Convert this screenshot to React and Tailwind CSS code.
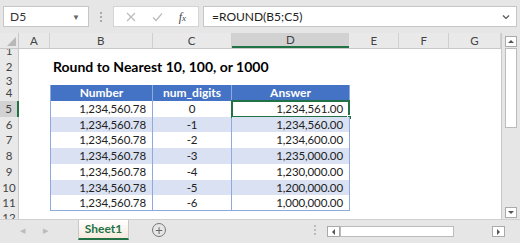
import React from 'react';

const font = { fontFamily: 'Lato, "Open Sans", sans-serif' };

const cols = [
  { key: 'A', w: 'w-[31px]' },
  { key: 'B', w: 'w-[103px]' },
  { key: 'C', w: 'w-[79px]' },
  { key: 'D', w: 'w-[118px]' },
  { key: 'E', w: 'w-[50px]' },
  { key: 'F', w: 'w-[50px]' },
  { key: 'G', w: 'w-[52px]' },
];

const data = [
  ['1,234,560.78', '0', '1,234,561.00'],
  ['1,234,560.78', '-1', '1,234,560.00'],
  ['1,234,560.78', '-2', '1,234,600.00'],
  ['1,234,560.78', '-3', '1,235,000.00'],
  ['1,234,560.78', '-4', '1,230,000.00'],
  ['1,234,560.78', '-5', '1,200,000.00'],
  ['1,234,560.78', '-6', '1,000,000.00'],
];

const rowHeights = {
  1: 'h-[7px]', 2: 'h-[21px]', 3: 'h-[8px]', 4: 'h-[16px]',
  5: 'h-[16px]', 6: 'h-[15px]', 7: 'h-[16px]', 8: 'h-[16px]',
  9: 'h-[16px]', 10: 'h-[15px]', 11: 'h-[16px]', 12: 'h-[8px]',
};

function RowHeader({ n }) {
  const active = n === 5;
  return (
    <div
      className={`w-[19px] shrink-0 flex justify-center overflow-hidden text-[11.5px] text-[#444] border-r ${
        active ? 'bg-[#d2d2d2] border-r-2 border-[#217346]' : 'bg-[#e9e9e9] border-[#c8c8c8]'
      } ${n === 1 ? 'items-end leading-[10px]' : n === 12 ? 'items-start leading-[14px]' : 'items-center'}`}
    >
      {n}
    </div>
  );
}

function TableRow({ n }) {
  if (n === 4) {
    return (
      <>
        <div className="w-[31px]" />
        {['Number', 'num_digits', 'Answer'].map((t, i) => (
          <div
            key={t}
            className={`${['w-[103px]', 'w-[79px]', 'w-[118px]'][i]} bg-[#4472c4] text-white font-bold text-[12px] flex items-center justify-center border-r border-[#8ea9db] ${i === 0 ? 'border-l' : ''}`}
          >
            {t}
          </div>
        ))}
      </>
    );
  }
  const [b, c, d] = data[n - 5];
  const band = n % 2 === 0 ? 'bg-[#d9e1f2]' : 'bg-white';
  const last = n === 11 ? 'border-b' : '';
  const txt = 'text-[11.5px] text-[#222] tracking-[-0.1px]';
  return (
    <>
      <div className="w-[31px]" />
      <div className={`w-[103px] ${band} ${last} border-l border-r border-[#8ea9db] flex items-center justify-end pr-[6px] ${txt}`}>
        {b}
      </div>
      <div className={`w-[79px] ${band} ${last} border-r border-[#8ea9db] flex items-center justify-center ${txt}`}>
        {c}
      </div>
      <div className={`relative w-[118px] ${band} ${last} border-r border-[#8ea9db] flex items-center justify-end pr-[6px] ${txt}`}>
        {d}
        {n === 5 && (
          <>
            <div className="absolute -left-px -top-px -right-px -bottom-px border-2 border-[#217346]" />
            <div className="absolute -right-[3px] -bottom-[3px] w-[5px] h-[5px] bg-[#217346] border border-white" />
          </>
        )}
      </div>
    </>
  );
}

function SheetRow({ n }) {
  return (
    <div className={`flex ${rowHeights[n]}`}>
      <RowHeader n={n} />
      {n === 2 ? (
        <div className="flex items-center pl-[3px] text-[14px] font-bold text-black whitespace-nowrap">
          <div className="w-[31px]" />
          Round to Nearest 10, 100, or 1000
        </div>
      ) : n >= 4 && n <= 11 ? (
        <TableRow n={n} />
      ) : null}
    </div>
  );
}

export default function App() {
  return (
    <div className="w-[520px] h-[243px] overflow-hidden bg-white flex flex-col" style={font}>
      {/* formula bar */}
      <div className="h-[33px] shrink-0 bg-[#e6e6e6] flex items-center px-[3px] gap-[4px]">
        <div className="w-[86px] h-[21px] bg-white border border-[#c6c6c6] flex items-center justify-between pl-[6px] pr-[8px] text-[12px] text-[#333]">
          D5
          <span className="text-[8px] text-[#666]">▼</span>
        </div>
        <div className="w-[16px] flex flex-col items-center gap-[2px]">
          <span className="w-[2px] h-[2px] bg-[#aaa]" />
          <span className="w-[2px] h-[2px] bg-[#aaa]" />
          <span className="w-[2px] h-[2px] bg-[#aaa]" />
        </div>
        <div className="w-[86px] h-[21px] bg-white border border-[#d4d4d4] flex items-center justify-between px-[12px]">
          <svg width="10" height="10" viewBox="0 0 10 10" stroke="#bbb" strokeWidth="1.2">
            <path d="M1 1L9 9M9 1L1 9" />
          </svg>
          <svg width="11" height="10" viewBox="0 0 11 10" stroke="#bbb" strokeWidth="1.2" fill="none">
            <path d="M1 5.5L4 8.5L10 1.5" />
          </svg>
          <span className="text-[12px] italic text-[#444]" style={{ fontFamily: '"Liberation Serif", serif' }}>
            f<span className="text-[9px]">x</span>
          </span>
        </div>
        <div className="flex-1 h-[21px] bg-white border border-[#c6c6c6] flex items-center justify-between pl-[8px] pr-[6px] text-[12px] text-[#222]">
          =ROUND(B5;C5)
          <svg width="8" height="6" viewBox="0 0 8 6" stroke="#555" strokeWidth="1.2" fill="none">
            <path d="M1 1.5L4 4.5L7 1.5" />
          </svg>
        </div>
      </div>

      {/* sheet */}
      <div className="flex h-[186px] shrink-0">
        <div className="w-[502px] flex flex-col border-r border-[#c8c8c8]">
          <div className="flex h-[16px] shrink-0 bg-[#e9e9e9] border-b border-[#c8c8c8]">
            <div className="w-[19px] relative border-r border-[#c8c8c8]">
              <div className="absolute right-[2px] bottom-[2px] w-0 h-0 border-l-[9px] border-l-transparent border-b-[9px] border-b-[#b8b8b8]" />
            </div>
            {cols.map((c) => (
              <div
                key={c.key}
                className={`${c.w} flex items-center justify-center text-[11.5px] text-[#444] ${
                  c.key === 'D' ? 'bg-[#d2d2d2] border-b-2 border-[#217346]' : 'border-r border-[#d0d0d0]'
                }`}
              >
                {c.key}
              </div>
            ))}
          </div>
          {Array.from({ length: 12 }, (_, i) => (
            <SheetRow key={i} n={i + 1} />
          ))}
        </div>

        {/* vertical scrollbar */}
        <div className="w-[18px] bg-[#e6e6e6] flex flex-col items-center pt-[3px] pb-[1px]">
          <div className="w-[12px] h-[11px] bg-white border border-[#aaa] flex items-center justify-center">
            <div className="w-0 h-0 border-l-[3px] border-r-[3px] border-b-[3px] border-l-transparent border-r-transparent border-b-[#555]" />
          </div>
          <div className="w-[12px] h-[80px] bg-white border border-[#bbb] mt-[1px]" />
          <div className="flex-1" />
          <div className="w-[12px] h-[11px] bg-white border border-[#aaa] flex items-center justify-center">
            <div className="w-0 h-0 border-l-[3px] border-r-[3px] border-t-[3px] border-l-transparent border-r-transparent border-t-[#555]" />
          </div>
        </div>
      </div>

      {/* tabs */}
      <div className="flex-1 bg-[#e6e6e6] flex items-start border-t border-[#d0d0d0]">
        <div className="w-[78px] h-[20px] flex items-center gap-[18px] pl-[20px] text-[7px] text-[#bbb]">
          <span>◀</span>
          <span>▶</span>
        </div>
        <div className="w-[51px] h-[20px] bg-gradient-to-b from-white to-[#f6e9dc] border-x border-[#c8c8c8] border-b-2 border-b-[#217346] flex items-center justify-center text-[12px] font-bold text-[#217346]">
          Sheet1
        </div>
        <div className="ml-[23px] mt-[3px] w-[14px] h-[14px] rounded-full border border-[#777] flex items-center justify-center text-[13px] leading-none text-[#666]">
          +
        </div>
        <div className="ml-[148px] mt-[5px] flex flex-col gap-[2px]">
          <span className="w-[2px] h-[2px] bg-[#bbb]" />
          <span className="w-[2px] h-[2px] bg-[#bbb]" />
          <span className="w-[2px] h-[2px] bg-[#bbb]" />
        </div>
        <div className="ml-[11px] mt-[6px] flex h-[11px]">
          <div className="w-[13px] h-[11px] bg-white border border-[#aaa] flex items-center justify-center">
            <div className="w-0 h-0 border-t-[3px] border-b-[3px] border-r-[3px] border-t-transparent border-b-transparent border-r-[#555]" />
          </div>
          <div className="w-[114px] h-[11px] bg-white border border-[#bbb]" />
          <div className="w-[38px]" />
          <div className="w-[13px] h-[11px] bg-white border border-[#aaa] flex items-center justify-center">
            <div className="w-0 h-0 border-t-[3px] border-b-[3px] border-l-[3px] border-t-transparent border-b-transparent border-l-[#555]" />
          </div>
        </div>
      </div>
    </div>
  );
}
